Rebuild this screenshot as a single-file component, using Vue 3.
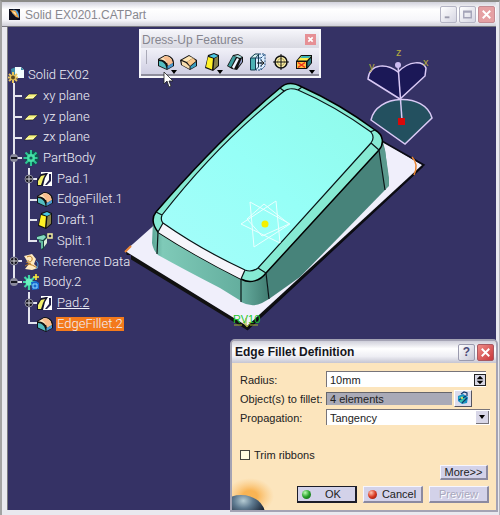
<script setup>
import { ref } from 'vue'

const rows = [
  { level: 0, icon: 'part', label: 'Solid EX02' },
  { level: 1, icon: 'plane', label: 'xy plane' },
  { level: 1, icon: 'plane', label: 'yz plane' },
  { level: 1, icon: 'plane', label: 'zx plane' },
  { level: 1, icon: 'gear', label: 'PartBody' },
  { level: 2, icon: 'pad', label: 'Pad.1' },
  { level: 2, icon: 'fillet', label: 'EdgeFillet.1' },
  { level: 2, icon: 'draft', label: 'Draft.1' },
  { level: 2, icon: 'split', label: 'Split.1' },
  { level: 1, icon: 'reference', label: 'Reference Data' },
  { level: 1, icon: 'body', label: 'Body.2' },
  { level: 2, icon: 'pad', label: 'Pad.2', underlined: true },
  { level: 2, icon: 'fillet', label: 'EdgeFillet.2', selected: true },
]

const expanders = [
  { x: 7, y: 93, open: true },
  { x: 7, y: 196, open: false },
  { x: 7, y: 217, open: true },
  { x: 22, y: 114, open: false },
  { x: 22, y: 238, open: false },
]

const tools = [
  { icon: 'fillet', name: 'Edge Fillet', more: true },
  { icon: 'chamfer', name: 'Chamfer' },
  { icon: 'draft', name: 'Draft Angle', more: true },
  { icon: 'shell', name: 'Shell' },
  { icon: 'thickness', name: 'Thickness' },
  { icon: 'thread', name: 'Thread/Tap' },
  { icon: 'remove', name: 'Remove Face', more: true },
]

const radius = ref('10mm')
const objects = ref('4 elements')
const propagation = ref('Tangency')
const trim = ref(false)
</script>

<template>
  <svg class="defs" aria-hidden="true">
    <symbol id="i-part" viewBox="0 0 18 18">
      <path d="M4 3l5-2v9H5z" fill="#3e8fa8" />
      <path d="M8 1h6l3 3v8H8z" fill="#f4ffff" />
      <path d="M14 1v3h3" fill="#3e8fa8" />
      <path d="M6 6v11M1 11.500h10M2 8l8 7M10 8l-8 7" stroke="#e7c45c" stroke-width="2" />
      <circle cx="6" cy="11.500" r="2" fill="#5a4a20" />
    </symbol>
    <symbol id="i-plane" viewBox="0 0 18 18">
      <path d="M2 12L7 7h9l-5 5z" fill="#f3f07a" stroke="#1b1b30" stroke-width=".6" />
      <path d="M4 11l8-1" stroke="#fffdc8" />
    </symbol>
    <symbol id="i-gear" viewBox="0 0 18 18">
      <circle cx="10" cy="9" r="7" fill="#12524f" />
      <path d="M9 1v16M1.500 9h14M3.500 3.500l11 11M14.500 3.500l-11 11" stroke="#2cc894" stroke-width="2" />
      <circle cx="9" cy="9" r="4" fill="#48e0a6" />
      <circle cx="9" cy="9" r="1.600" fill="#14605a" />
    </symbol>
    <symbol id="i-body" viewBox="0 0 18 18">
      <path d="M7 2v15M1 9h13M2.500 4l10 10M12.500 4l-10 10" stroke="#3fd6a5" stroke-width="2.200" />
      <circle cx="7" cy="9" r="3.500" fill="#6bf0c0" />
      <path d="M9 9l5-1 3 2v6l-7 1z" fill="#1667cf" />
      <path d="M11 11h4v4h-4z" fill="none" stroke="#8fdcff" />
      <path d="M14 1v6M11 4h6" stroke="#ffe93a" stroke-width="1.600" />
    </symbol>
    <symbol id="i-pad" viewBox="0 0 18 18">
      <path d="M5 2h11v14H5z" fill="#fff" />
      <path d="M1 10l4-6 5-1h2L9 8l-2 8H1z" fill="#16152c" />
      <path d="M2 11l3-5 4-1-2 4-2 6H2z" fill="#f1ef68" />
      <path d="M13 4h2v7l-4 4H9l4-5z" fill="#24224c" />
    </symbol>
    <symbol id="i-fillet" viewBox="0 0 18 18">
      <path d="M1 6l7-4c5 0 9 3 9 8v3l-7 4-9-4z" fill="#111" />
      <path d="M2 6.500l6-3.500c3 0 5 1 7 3.500L9.500 10C8 7.500 5 6 2 6.500z" fill="#ffe6bd" />
      <path d="M7 4l2-1c4 1 6 3 7 7l-5 3c-1-4-2-6-5-8z" fill="#f8bd8f" />
      <path d="M2 8c4 0 7 3 7.500 8L2 12.500z" fill="#54bcc0" />
      <path d="M10.500 13l5.500-3v3l-5.500 3z" fill="#4897d0" />
    </symbol>
    <symbol id="i-chamfer" viewBox="0 0 18 18">
      <path d="M0 7l9-5 8 5v6l-7 4-9-5z" fill="#111" />
      <path d="M2 7l7-4 4 2-6 4z" fill="#ffe6b5" />
      <path d="M7 9l6-4 3 3-6 5z" fill="#f8c88b" />
      <path d="M1.500 8L6 10l3.500 3.500V16L2 12z" fill="#f6dcae" />
      <path d="M10.500 13.500L16 9v4l-5.500 3z" fill="#3e9fc0" />
    </symbol>
    <symbol id="i-draft" viewBox="0 0 18 18">
      <path d="M5 2l6-2 5 2v11l-6 5-8-3z" fill="#111" />
      <path d="M6 3l5-2 4 2-4 2z" fill="#4ac8e4" />
      <path d="M5 4l5 1.500-1 11L3 14z" fill="#fff126" />
      <path d="M11.500 5.500L15 3.500v9l-4.500 4z" fill="#88824a" />
    </symbol>
    <symbol id="i-split" viewBox="0 0 18 18">
      <path d="M1 4l8-2 2 3v6l-4 7-2-1V9L1 8z" fill="#163f3e" />
      <path d="M1 5l7-2 2 2-3 3-6-1z" fill="#84dac0" />
      <path d="M3 8l4 1v7l-2 1V11L3 10z" fill="#65baa0" />
      <path d="M8 9l3-3v5l-3 4z" fill="#ddefd8" />
      <path d="M12 2h4v4h-4z" fill="#232240" stroke="#f4f0a0" stroke-width="1.500" />
    </symbol>
    <symbol id="i-reference" viewBox="0 0 18 18">
      <path d="M2 3l8-2 4 5-2 5 4 4-6 2-7-1 4-5z" fill="#ffeac0" />
      <path d="M5 4c3-2 6 0 5 3s-4 2-4 0M3 13c4-3 8-1 12 2M4 9l5 2" fill="none" stroke="#ba7a20" />
      <path d="M14 16c3-3 2-7 0-8" fill="none" stroke="#49a6df" />
    </symbol>
    <symbol id="i-shell" viewBox="0 0 18 18">
      <path d="M1 13L7 2l5-1 5 3v5l-6 8-5-1z" fill="#111" />
      <path d="M2 13L7 3l3 1-5 10z" fill="#3c9c9c" />
      <path d="M8 3l4-1 4 2-2 1z" fill="#a9e2e2" />
      <path d="M6 14l5-9 2 1-5 10z" fill="#f1f5ff" />
      <path d="M12 14l3-7 1-2v4z" fill="#9aa4d0" />
    </symbol>
    <symbol id="i-thickness" viewBox="0 0 18 18">
      <path d="M1 5h5v12H1z" fill="#4cb2b4" />
      <path d="M6 5l4-4h6v12l-4 4H6z" fill="#dceeff" />
      <path d="M1 5l4-4h5L6 5z" fill="#d2f1ee" />
      <path d="M1.500 5v12h5V5zM1.500 5L6 1h4L6.500 5M6.500 17l3-3V2" fill="none" stroke="#143b50" />
      <path d="M7 5h5v12H7M12 5l4-4v12l-4 4M10 1h6" fill="none" stroke="#1c4a7a" stroke-dasharray="2 1" />
      <path d="M8 10h7M12 7.500l3 2.500-3 2.500" fill="none" stroke="#111" />
    </symbol>
    <symbol id="i-thread" viewBox="0 0 18 18">
      <circle cx="9" cy="9" r="6" fill="#fff3ae" stroke="#111" stroke-width="1.500" />
      <circle cx="9" cy="9" r="3.500" fill="none" stroke="#b5a556" />
      <path d="M9 1v16M1 9h16" stroke="#111" />
    </symbol>
    <symbol id="i-remove" viewBox="0 0 18 18">
      <path d="M1 8l5-6h11v8l-5 6H1z" fill="#111" />
      <path d="M2.500 7.500L6.500 3H16l-4 4.500z" fill="#fff04c" />
      <path d="M5 5l2-2h9l-2 2z" fill="#3cb3b5" />
      <path d="M2 9h9v6H2z" fill="#ffc341" />
      <path d="M3 9.500l7 5M10 9.500l-7 5" stroke="#ed311d" stroke-width="1.500" />
      <path d="M12.500 9L16 5v5l-3.500 4z" fill="#2b7f83" />
    </symbol>
  </svg>

  <main class="window">
    <header class="titlebar">
      <svg class="app-icon" viewBox="0 0 12 12" aria-hidden="true">
        <rect width="12" height="12" fill="#0b0d1c" />
        <path d="M4 1c5-1 7 3 7 8L8 9 3 4z" fill="#4ea2df" />
        <path d="M1 1l6 1 4 8-4-2z" fill="#f2a13a" />
        <path d="M3 2l4 2 1 3z" fill="#fff8d0" />
      </svg>
      <h1>Solid EX0201.CATPart</h1>
      <div class="controls">
        <button class="ctl" aria-label="Minimize"><svg viewBox="0 0 16 16"><path d="M4 11h5" stroke="#9a9aac" stroke-width="2" /></svg></button>
        <button class="ctl" aria-label="Maximize"><svg viewBox="0 0 16 16"><path d="M4 4.500h8v7H4zM4 5.500h8" fill="none" stroke="#a4a4b8" stroke-width="1.500" /></svg></button>
        <button class="ctl ctl-close" aria-label="Close"><svg viewBox="0 0 16 16"><path d="M4 4l8 8M12 4l-8 8" stroke="#fff" stroke-width="2" /></svg></button>
      </div>
    </header>

    <section class="viewport">
      <svg class="scene" viewBox="7 27 489 483" aria-label="Filleted solid on a base plate">
        <defs>
          <linearGradient id="front" x1="0" x2="1"><stop offset="0" stop-color="#5aa595" /><stop offset=".12" stop-color="#7fcab8" /><stop offset="1" stop-color="#64ae9e" /></linearGradient>
          <linearGradient id="corner" x1="0" x2="1"><stop offset="0" stop-color="#66ad9f" /><stop offset="1" stop-color="#417d72" /></linearGradient>
          <linearGradient id="topface" x1="0" y1="1" x2="1" y2="0"><stop offset="0" stop-color="#a6fdfa" /><stop offset=".5" stop-color="#96fff7" /><stop offset="1" stop-color="#8ffae9" /></linearGradient>
        </defs>

        <path d="M126 251L247 326 423 164V167L247 330 127 257z" fill="#111" />
        <path d="M125 251L160 220 380 140 422 165 247 326z" fill="#f0effb" />
        <path d="M380 140L424 165 247 330" fill="none" stroke="#0b0b14" stroke-width="1.500" />
        <path d="M125 252L131 246" fill="none" stroke="#e98432" stroke-width="2" />
        <path d="M412 157q7 7 2 18" fill="none" stroke="#e98432" stroke-width="1.500" />

        <path d="M153 221L152 243Q153 250 158 255Q185 270 220 288L241 301V279L158 232z" fill="url(#front)" />
        <path d="M241 278V302Q252 308 262 303L269 299 266 271z" fill="url(#corner)" />
        <path d="M266 272L269 299 300 277 385 190 389 183 385 150 382 138z" fill="#47837a" />
        <path d="M379 150L382 143 385 150 389 178V186L385 190z" fill="#5a998d" />

        <path d="M156 212C152 217 152 224 158 232Q195 256 241 279C250 284 260 281 266 273L379 150C384 144 384 135 375 130Q340 104 302 87C293 82 286 82 280 88Q220 138 156 212z" fill="#86ead3" stroke="#000" stroke-width="1.500" />
        <path d="M158 232L163 223Q200 249 245 270L241 279Q195 256 158 232z" fill="#f5f5fb" />
        <path d="M162 215C161 218 161 221 163 223Q200 249 245 270C250 272 254 271 258 268L371 143C374 139 374 136 371 132Q335 106 298 90C292 88 288 88 283 92Q218 143 162 215z" fill="url(#topface)" />
        <path d="M162 215C161 218 161 221 163 223Q200 249 245 270C250 272 254 271 258 268L371 143C374 139 374 136 371 132Q335 106 298 90C292 88 288 88 283 92Q218 143 162 215zM280 88l4 3M302 87l-4 3M375 130l-5 2M379 150l-8-7M266 273l-8-5M241 279l4-9M158 232l5-9M156 212l6 3M158 232l-1 22M241 279v23M266 273l3 26M379 150l6 40" fill="none" stroke="#0a1416" stroke-width="1.200" />

        <path d="M250 202L290 224 254 247zM276 201L241 224 280 243zM264 204L289 224 262 236 247 219z" fill="none" stroke="#e9ffff" stroke-width="1" />
        <circle cx="265" cy="224" r="3.500" fill="#f4f000" />

        <text class="mark" x="233" y="323">RV10</text>
        <path d="M234 325h8M250 325h8M246 318v8M243 322l4 5 4-5" fill="none" stroke="#a5b52a" />

        <path d="M371 120C376 94 425 92 432 118L405 144z" fill="#23505f" stroke="#d9c9f5" stroke-width="1.500" />
        <path d="M400 99L368 79C370 62 388 64 398 72C410 60 423 61 426 68L425 76z" fill="#1b1857" stroke="#d9c9f5" stroke-width="1.500" />
        <path d="M398 65L402 120" stroke="#d9c9f5" stroke-width="1.500" />
        <circle cx="398" cy="65" r="3" fill="#cdbcf0" />
        <path d="M398 118h7v7h-7z" fill="#d80909" />
        <g class="axis">
          <text x="396" y="56">z</text>
          <text x="423" y="66">x</text>
          <text x="369" y="70">y</text>
        </g>
      </svg>

      <nav class="tree" aria-label="Specification tree">
        <svg class="links" viewBox="0 0 40 269" aria-hidden="true">
          <path d="M7 18V217M7 31h8M7 52h8M7 73h8M7 93h8M7 196h8M7 217h8M22 103V177M22 114h8M22 135h8M22 155h8M22 176h8M22 227V259M22 238h8M22 258h8" class="wire" />
          <g v-for="e in expanders" :key="e.x + '-' + e.y">
            <circle :cx="e.x" :cy="e.y" r="4" :class="e.open ? 'knob-open' : 'knob'" />
            <path :d="`M${e.x - 3} ${e.y}h6`" :class="e.open ? 'sign-open' : 'sign'" />
            <path v-if="!e.open" :d="`M${e.x} ${e.y - 3}v6`" class="sign" />
          </g>
        </svg>
        <ul>
          <li v-for="r in rows" :key="r.label" :class="'level-' + r.level">
            <svg class="icon" aria-hidden="true"><use :href="'#i-' + r.icon" /></svg>
            <span class="label" :class="{ underlined: r.underlined, selected: r.selected }">{{ r.label }}</span>
          </li>
        </ul>
      </nav>

      <aside class="toolbar">
        <div class="toolbar-title">
          <h2>Dress-Up Features</h2>
          <button class="toolbar-close" aria-label="Close toolbar"><svg viewBox="0 0 10 10"><path d="M3 3l4 4M7 3l-4 4" stroke="#fff" stroke-width="1.500" /></svg></button>
        </div>
        <div class="tools">
          <button v-for="t in tools" :key="t.icon" class="tool" :aria-label="t.name">
            <svg class="icon" aria-hidden="true"><use :href="'#i-' + t.icon" /></svg>
            <svg v-if="t.more" class="caret" viewBox="0 0 6 4" aria-hidden="true"><path d="M0 0h6L3 4z" /></svg>
          </button>
        </div>
        <svg class="pointer" viewBox="0 0 11 17" aria-hidden="true"><path d="M1 1v12l3-3 2 6 2-1-2-5h4z" fill="#fff" stroke="#222" stroke-width=".8" /></svg>
      </aside>
    </section>

    <form class="dialog" @submit.prevent>
      <header class="dialog-title">
        <h2>Edge Fillet Definition</h2>
        <button type="button" class="help" aria-label="Help">?</button>
        <button type="button" class="close" aria-label="Close dialog"><svg viewBox="0 0 16 16"><path d="M4 4l8 8M12 4l-8 8" stroke="#fff" stroke-width="2" /></svg></button>
      </header>
      <div class="dialog-body">
        <svg class="planet" viewBox="0 0 42 32" aria-hidden="true">
          <defs>
            <radialGradient id="glow"><stop offset=".3" stop-color="#f9b454" /><stop offset="1" stop-color="#fbc679" stop-opacity="0" /></radialGradient>
            <radialGradient id="ball" cx=".55" cy=".15"><stop offset="0" stop-color="#b6ccd4" /><stop offset=".4" stop-color="#5e7a90" /><stop offset="1" stop-color="#131c2c" /></radialGradient>
          </defs>
          <ellipse cx="18" cy="18" rx="24" ry="18" fill="url(#glow)" />
          <ellipse cx="9" cy="36" rx="24" ry="19" fill="url(#ball)" />
        </svg>

        <div class="fields">
          <label for="radius">Radius:</label>
          <div class="spin">
            <input id="radius" v-model="radius" type="text" />
            <button type="button" class="spinner" aria-label="Change radius"><svg viewBox="0 0 12 12"><path d="M6 1l4 4H2zM6 11l4-4H2z" /></svg></button>
          </div>
          <label for="objects">Object(s) to fillet:</label>
          <div class="objects">
            <input id="objects" v-model="objects" type="text" />
            <button type="button" class="pick" aria-label="Edit list">
              <svg viewBox="0 0 14 14"><path d="M2 5l5-2 5 3-1 6-5 1-4-3z" fill="#168fc5" /><path d="M3 6l4-1 3 3-2 4-4-1z" fill="#36c2b0" /><path d="M5 3l3-2 3 1v3M3 9l7-4M6 12l5-5" fill="none" stroke="#0c3670" stroke-width="1.200" /><circle cx="6" cy="7" r="1" fill="#fff06a" /></svg>
            </button>
          </div>
          <label for="propagation">Propagation:</label>
          <div class="combo">
            <select id="propagation" v-model="propagation">
              <option>Tangency</option>
              <option>Minimal</option>
            </select>
            <span class="arrow" aria-hidden="true"><svg viewBox="0 0 6 4"><path d="M0 0h6L3 4z" /></svg></span>
          </div>
        </div>

        <label class="check"><input v-model="trim" type="checkbox" />Trim ribbons</label>

        <div class="more-row"><button type="button" class="btn more">More&gt;&gt;</button></div>
        <div class="actions">
          <button type="submit" class="btn ok"><i class="led green"></i><span>OK</span></button>
          <button type="button" class="btn"><i class="led red"></i><span>Cancel</span></button>
          <button type="button" class="btn" disabled><span>Preview</span></button>
        </div>
      </div>
    </form>
  </main>
</template>

<style>
body {
  margin: 0;
}
</style>

<style scoped>
* {
  box-sizing: border-box;
}
button,
input,
select {
  font: inherit;
  color: inherit;
  margin: 0;
  padding: 0;
  border: 0;
  border-radius: 0;
}
svg {
  display: block;
}
h1,
h2,
ul {
  margin: 0;
  padding: 0;
}
.defs {
  position: absolute;
  width: 0;
  height: 0;
}
.window {
  position: relative;
  display: flex;
  flex-direction: column;
  min-height: 100vh;
  padding: 0 3px 5px 5px;
  background: #e9e9ef;
  border-top: 2px solid #8b8b87;
  border-left: 2px solid #a3a3a3;
  border-right: 1px solid #b5b5bb;
  font-family: "Liberation Sans", Arial, sans-serif;
  font-size: 11px;
  color: #222;
}
.titlebar {
  display: flex;
  align-items: center;
  gap: 5px;
  height: 25px;
  margin-left: -5px;
  padding: 1px 1px 0 7px;
  background: linear-gradient(#d2d2dc, #fff 30%, #f6f6fa 75%, #cfcfd8);
  border-bottom: 1px solid #77777f;
}
.app-icon {
  width: 11px;
  height: 11px;
}
.titlebar h1 {
  flex: 1;
  font-size: 12px;
  font-weight: 400;
  color: #88888f;
}
.controls {
  display: flex;
  gap: 2px;
}
.ctl {
  width: 17px;
  height: 17px;
  border: 1px solid #b4b4c4;
  border-radius: 2px;
  background: linear-gradient(135deg, #fff, #d5d5e2);
}
.ctl-close {
  background: #e5a0a3;
  border-color: #c58a92;
}
.viewport {
  position: relative;
  flex: 1;
  min-height: 483px;
  background: #353265;
  overflow: hidden;
}
.viewport::before {
  content: "";
  position: absolute;
  inset: 0 auto 0 0;
  width: 1px;
  background: #77777f;
}
.scene {
  position: absolute;
  top: 0;
  left: 0;
  width: 489px;
  height: 483px;
}
.mark {
  font-size: 11px;
  fill: #1bc92b;
}
.axis {
  font-size: 11px;
  fill: #b5aa3e;
}
.tree {
  position: relative;
  width: 140px;
  padding-top: 38px;
}
.links {
  position: absolute;
  top: 38px;
  left: 0;
  width: 40px;
  height: 269px;
}
.wire {
  fill: none;
  stroke: #e4e4ee;
  stroke-width: 2;
}
.knob {
  fill: #16151f;
  stroke: #8c8ca0;
}
.knob-open {
  fill: #8a8a9c;
}
.sign {
  stroke: #d8d8de;
}
.sign-open {
  stroke: #16161e;
  stroke-width: 2;
}
.tree ul {
  position: relative;
  display: grid;
  grid-template-rows: repeat(13, 1fr);
  height: 269px;
  list-style: none;
}
.tree li {
  display: flex;
  align-items: center;
  gap: 2px;
  white-space: nowrap;
}
.level-0 {
  padding-left: 0;
}
.level-1 {
  padding-left: 15px;
}
.level-2 {
  padding-left: 29px;
}
.icon {
  flex: none;
  width: 18px;
  height: 18px;
}
.label {
  padding: 0 1px;
  background: #353265;
  color: #f0f0f8;
  font-family: Roboto, sans-serif;
  font-size: 13px;
  font-weight: 300;
  line-height: 14px;
}
.underlined {
  text-decoration: underline;
}
.selected {
  background: #f47a1c;
}
.toolbar {
  position: absolute;
  top: 2px;
  left: 132px;
  width: 182px;
  border: 2px solid #f6f6fa;
  background: #dcdbe9;
}
.toolbar-title {
  display: flex;
  align-items: center;
  justify-content: space-between;
  height: 17px;
  padding: 0 3px 0 1px;
  background: linear-gradient(#f4f4f9, #d9d9e2);
}
.toolbar-title h2 {
  font-size: 12px;
  font-weight: 400;
  color: #85858f;
}
.toolbar-close {
  width: 11px;
  height: 11px;
  background: #e69095;
}
.tools {
  display: flex;
  height: 28px;
  padding: 1px 4px 0 13px;
  background: linear-gradient(#f1f1f8, #cfcee2);
  border-bottom: 2px solid #8e8d9c;
}
.tools::before {
  content: "";
  width: 1px;
  height: 14px;
  margin: 1px 7px 0 -8px;
  background: #a9a9b7;
}
.tool {
  position: relative;
  display: grid;
  place-items: center;
  width: 23px;
  height: 26px;
  background: none;
}
.caret {
  position: absolute;
  right: 0;
  bottom: 1px;
  width: 6px;
  height: 4px;
}
.pointer {
  position: absolute;
  top: 40px;
  left: 22px;
  width: 11px;
  height: 17px;
}
.dialog {
  position: absolute;
  right: 1px;
  bottom: 3px;
  width: 268px;
  border: 2px solid #a4a3b4;
  border-radius: 5px 5px 0 0;
  background: #fce5bd;
  overflow: hidden;
}
.dialog-title {
  display: flex;
  align-items: center;
  gap: 2px;
  height: 22px;
  padding: 0 2px 0 3px;
  background: linear-gradient(#cfcfda, #fff 35%, #eeeef4 70%, #c5c5d2);
}
.dialog-title h2 {
  flex: 1;
  font-size: 12px;
  color: #15151c;
}
.help,
.close {
  width: 17px;
  height: 17px;
  border: 1px solid #9a9aae;
  border-radius: 2px;
  background: linear-gradient(135deg, #fff, #c7c7d6);
  font-weight: bold;
  font-size: 12px;
  line-height: 14px;
  color: #4b4b78;
}
.close {
  border-color: #a85860;
  background: linear-gradient(135deg, #ee8c86, #c9383c);
}
.dialog-body {
  position: relative;
  padding: 8px 6px 7px 8px;
}
.planet {
  position: absolute;
  left: 0;
  bottom: 0;
  width: 42px;
  height: 32px;
}
.fields {
  display: grid;
  grid-template-columns: 86px minmax(0, 1fr);
  row-gap: 3px;
  align-items: center;
}
.fields label {
  padding-top: 2px;
  white-space: nowrap;
}
.spin,
.objects,
.combo {
  display: flex;
  align-items: center;
  height: 16px;
}
.spin {
  margin-right: 4px;
  border-top: 1px solid #77747a;
  border-left: 1px solid #77747a;
  background: #fff;
}
input[type="text"] {
  flex: 1;
  min-width: 0;
  padding-left: 3px;
  background: transparent;
}
.spin input {
  height: 13px;
}
.spinner {
  width: 12px;
  height: 12px;
  border: 1px solid #222;
  background: #d6d6e4;
}
.objects {
  gap: 2px;
  margin-right: 18px;
}
.objects input[type="text"] {
  height: 13px;
  border-top: 1px solid #66666c;
  border-left: 1px solid #66666c;
  background: #a9aab7;
}
.pick {
  display: grid;
  place-items: center;
  width: 18px;
  height: 17px;
  background: #dddcec;
  border: 1px solid #fff;
  border-right-color: #55555f;
  border-bottom-color: #55555f;
}
.pick svg {
  width: 14px;
  height: 14px;
}
.combo {
  position: relative;
  border-top: 1px solid #77747a;
  border-left: 1px solid #77747a;
  background: #fff;
}
.combo select {
  appearance: none;
  width: 100%;
  height: 15px;
  padding-left: 3px;
  background: transparent;
}
.arrow {
  position: absolute;
  right: 1px;
  top: 1px;
  display: grid;
  place-items: center;
  width: 13px;
  height: 13px;
  background: #d8d7e8;
  border-right: 1px solid #77747a;
  border-bottom: 1px solid #77747a;
  pointer-events: none;
}
.arrow svg {
  width: 6px;
  height: 4px;
}
.check {
  display: flex;
  align-items: center;
  gap: 4px;
  margin-top: 23px;
  line-height: 14px;
}
.check input {
  appearance: none;
  width: 10px;
  height: 10px;
  border: 1px solid #44443c;
  background: #fffbe0;
}
.more-row {
  display: flex;
  justify-content: flex-end;
  margin: 3px 2px 0 0;
}
.btn {
  display: flex;
  align-items: center;
  justify-content: center;
  width: 60px;
  height: 17px;
  background: #d3d2e9;
  border: 1px solid #f6f6ff;
  border-right: 2px solid #8b8aa0;
  border-bottom: 2px solid #8b8aa0;
}
.btn span {
  flex: 1;
  text-align: center;
}
.more {
  width: 48px;
  height: 15px;
}
.actions {
  display: flex;
  justify-content: flex-end;
  gap: 6px;
  margin: 6px 1px 0 0;
}
.ok {
  border-color: #1c1c28;
}
.led {
  width: 9px;
  height: 9px;
  margin-left: 4px;
  border-radius: 50%;
}
.green {
  background: radial-gradient(circle at 35% 30%, #b9ffb0, #27a02a 50%, #0b5510);
}
.red {
  background: radial-gradient(circle at 35% 30%, #ffc4b0, #d93a22 50%, #7a120a);
}
.btn:disabled {
  color: #a9a8bd;
  text-shadow: 1px 1px #fff;
}
</style>
